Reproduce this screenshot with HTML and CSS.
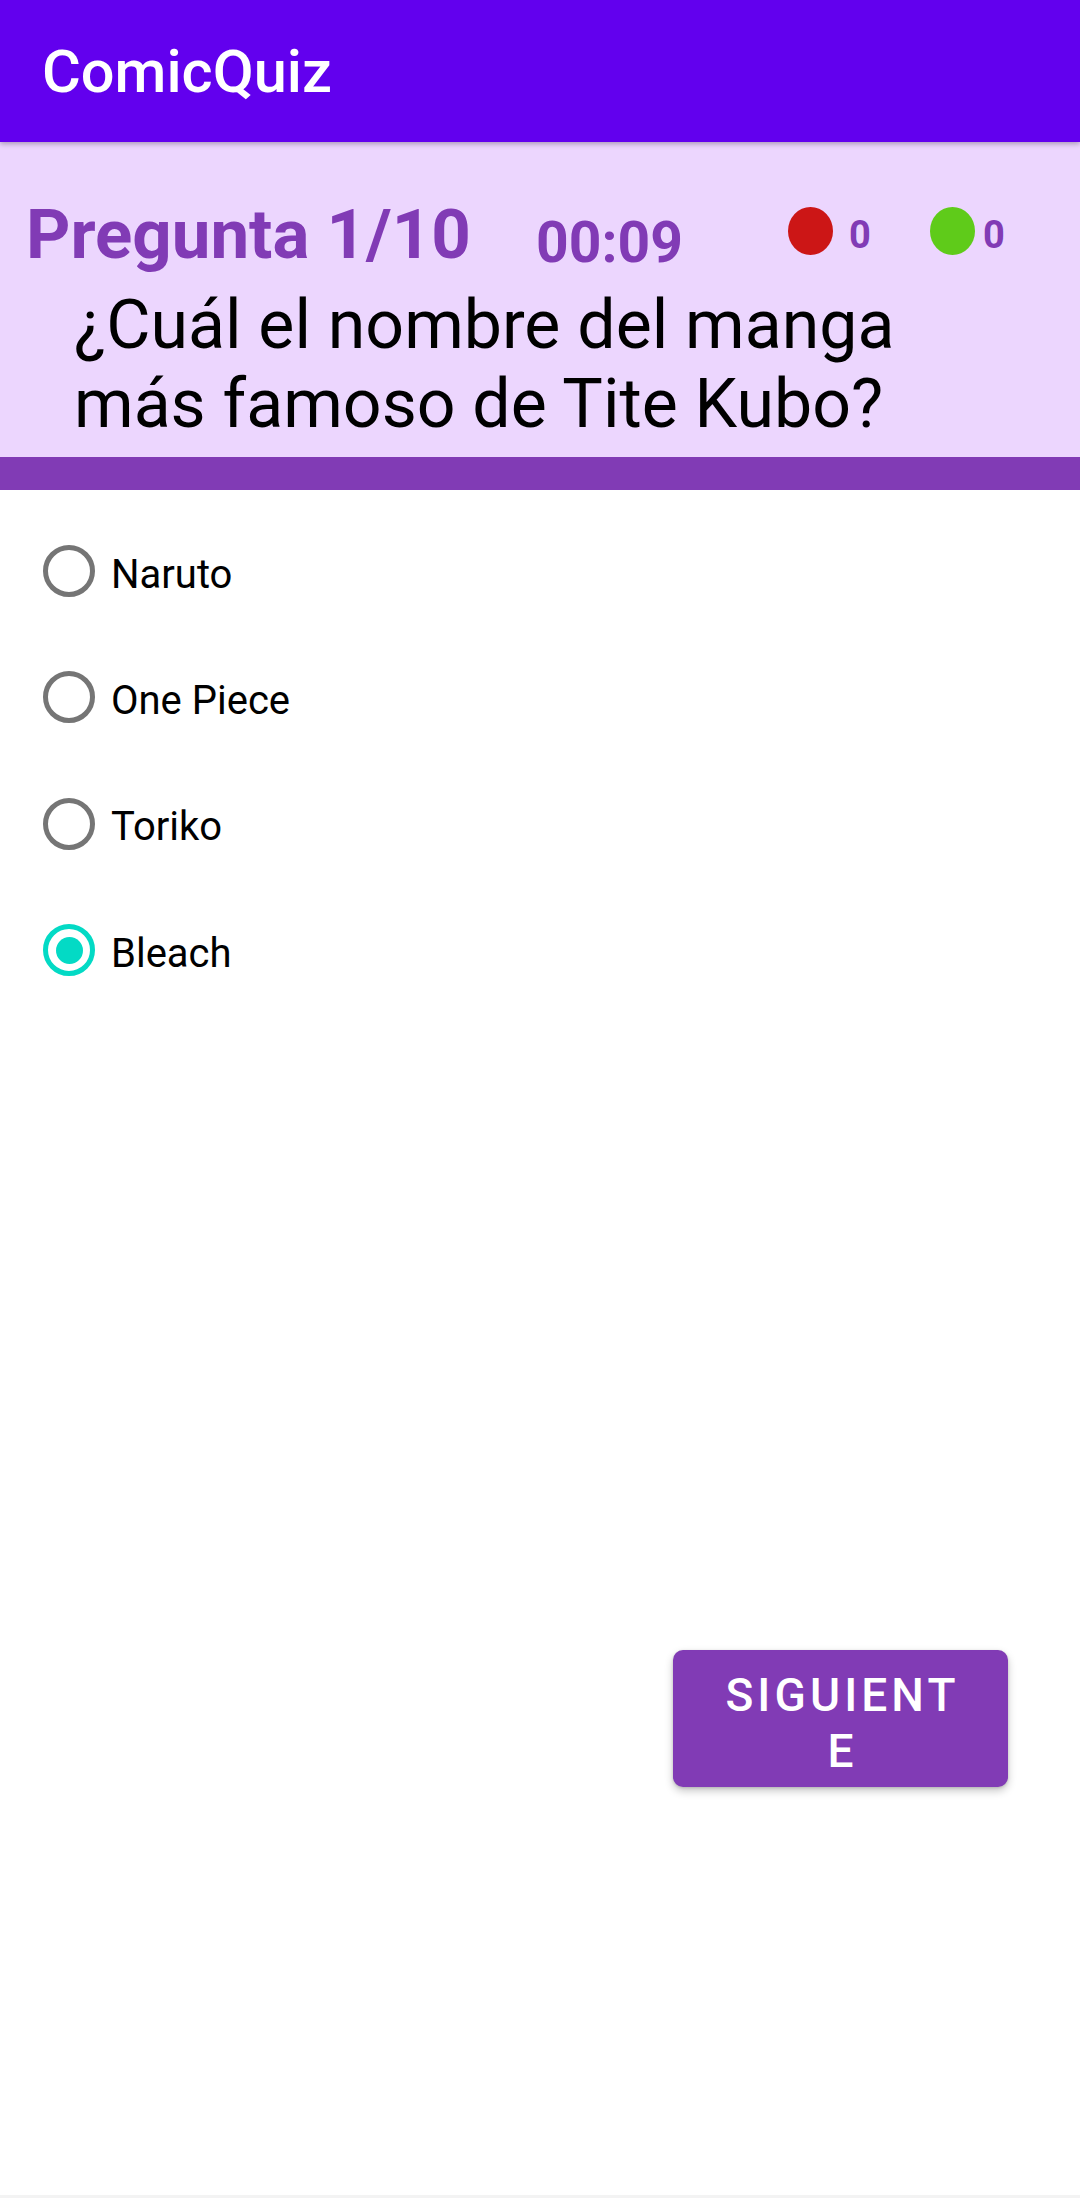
FILE: index.html
```html
<!DOCTYPE html>
<html lang="es">
<head>
<meta charset="utf-8">
<title>ComicQuiz</title>
<link rel="stylesheet" href="styles.css">
</head>
<body>
<div class="screen">
  <header class="toolbar">
    <h1 class="toolbar-title">ComicQuiz</h1>
  </header>
  <section class="quiz-head">
    <div class="status-row">
      <div class="q-count">Pregunta 1/10</div>
      <div class="timer">00:09</div>
      <div class="score score-wrong">
        <span class="dot dot-red"></span>
        <span class="score-num">0</span>
      </div>
      <div class="score score-right">
        <span class="dot dot-green"></span>
        <span class="score-num">0</span>
      </div>
    </div>
    <p class="question">¿Cuál el nombre del manga más famoso de Tite Kubo?</p>
  </section>
  <div class="head-bar"></div>
  <main class="options">
    <label class="option"><span class="radio"></span><span class="option-text">Naruto</span></label>
    <label class="option"><span class="radio"></span><span class="option-text">One Piece</span></label>
    <label class="option"><span class="radio"></span><span class="option-text">Toriko</span></label>
    <label class="option"><span class="radio radio-checked"></span><span class="option-text">Bleach</span></label>
  </main>
  <div class="actions">
    <button class="next-btn">Siguiente</button>
  </div>
  <div class="spacer"></div>
  <div class="nav-edge"></div>
</div>
</body>
</html>
```

FILE: styles.css
```css
* {
  box-sizing: border-box;
}

html, body {
  margin: 0;
  padding: 0;
  background: #ffffff;
}

body {
  font-family: Roboto, "Liberation Sans", Arial, sans-serif;
  color: #000000;
}

.screen {
  width: 1080px;
  height: 2198px;
  display: flex;
  flex-direction: column;
  overflow: hidden;
}

.toolbar {
  position: relative;
  z-index: 2;
  height: 142px;
  flex: none;
  background: #6200ee;
  display: flex;
  align-items: center;
  padding-left: 42px;
  box-shadow: 0 2px 5px rgba(0, 0, 0, 0.28);
}

.toolbar-title {
  margin: 0;
  font-size: 59.5px;
  font-weight: 500;
  color: #ffffff;
  line-height: 70px;
  padding-top: 2px;
}

.quiz-head {
  flex: none;
  background: #ecd6fe;
  padding: 51px 40px 13px 0;
}

.status-row {
  display: flex;
  align-items: flex-start;
  height: 83px;
}

.q-count {
  flex: none;
  width: 510px;
  margin-left: 26px;
  margin-top: 1px;
  font-size: 69px;
  font-weight: 700;
  color: #813bb5;
  line-height: 81px;
  white-space: nowrap;
}

.timer {
  flex: none;
  width: 252px;
  margin-top: 16px;
  font-size: 57px;
  font-weight: 700;
  color: #813bb5;
  line-height: 67px;
  white-space: nowrap;
}

.score {
  flex: none;
  display: flex;
  align-items: flex-start;
}

.score-wrong {
  width: 142px;
}

.dot {
  display: block;
  flex: none;
  width: 45px;
  height: 48px;
  border-radius: 50%;
  margin-top: 14px;
}

.dot-red {
  background: #cc1616;
}

.dot-green {
  background: #5fcb1a;
}

.score-num {
  font-size: 38px;
  font-weight: 700;
  color: #813bb5;
  line-height: 45px;
  margin-top: 20px;
}

.score-wrong .score-num {
  margin-left: 16px;
}

.score-right .score-num {
  margin-left: 8px;
}

.question {
  margin: 10px 40px 0 74px;
  font-size: 68px;
  font-weight: 400;
  line-height: 79px;
  color: #000000;
}

.head-bar {
  flex: none;
  height: 33px;
  background: #813bb5;
}

.options {
  flex: none;
  display: flex;
  flex-direction: column;
  padding-top: 18px;
}

.option {
  height: 126.3px;
  display: flex;
  align-items: center;
  padding-left: 43px;
}

.radio {
  flex: none;
  width: 52px;
  height: 52px;
  border-radius: 50%;
  border: 5px solid #757575;
  display: flex;
  align-items: center;
  justify-content: center;
}

.radio-checked {
  border-color: #03dac5;
}

.radio-checked::after {
  content: "";
  display: block;
  width: 27px;
  height: 27px;
  border-radius: 50%;
  background: #03dac5;
}

.option-text {
  margin-left: 16px;
  padding-top: 6px;
  font-size: 40px;
  line-height: 47px;
  color: #000000;
}

.actions {
  flex: none;
  display: flex;
  justify-content: flex-end;
  padding-right: 72px;
  margin-top: 637px;
}

.next-btn {
  width: 335px;
  height: 137px;
  padding: 16.5px 44px 0 48px;
  border: none;
  border-radius: 10px;
  background: #813bb5;
  color: #ffffff;
  font-family: Roboto, "Liberation Sans", Arial, sans-serif;
  font-size: 46px;
  font-weight: 500;
  letter-spacing: 4.1px;
  line-height: 56px;
  text-transform: uppercase;
  text-align: center;
  word-break: break-all;
  display: flex;
  align-items: flex-start;
  justify-content: center;
  box-shadow: 0 4px 8px rgba(0, 0, 0, 0.22), 0 1px 3px rgba(0, 0, 0, 0.15);
}

.spacer {
  flex: 1;
}

.nav-edge {
  flex: none;
  height: 3px;
  background: #f3f3f3;
}
```
